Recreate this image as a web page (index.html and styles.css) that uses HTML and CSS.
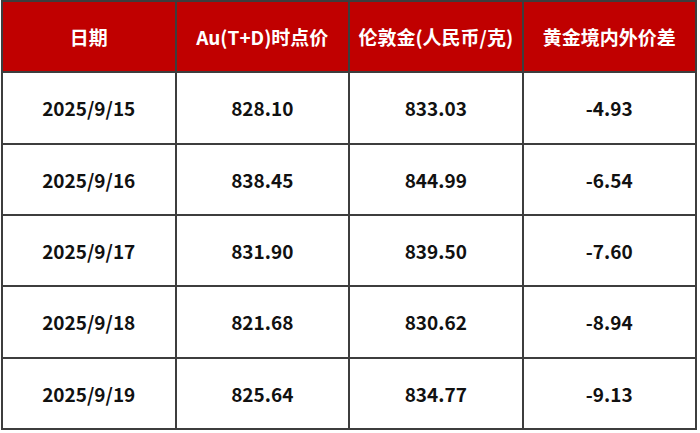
FILE: index.html
```html
<!DOCTYPE html>
<html lang="zh-CN">
<head>
<meta charset="utf-8">
<link rel="stylesheet" href="styles.css">
</head>
<body>
<div class="table">
  <div class="cell head">日期</div>
  <div class="cell head">Au(T+D)时点价</div>
  <div class="cell head">伦敦金(人民币/克)</div>
  <div class="cell head">黄金境内外价差</div>

  <div class="cell">2025/9/15</div>
  <div class="cell">828.10</div>
  <div class="cell">833.03</div>
  <div class="cell">-4.93</div>

  <div class="cell">2025/9/16</div>
  <div class="cell">838.45</div>
  <div class="cell">844.99</div>
  <div class="cell">-6.54</div>

  <div class="cell">2025/9/17</div>
  <div class="cell">831.90</div>
  <div class="cell">839.50</div>
  <div class="cell">-7.60</div>

  <div class="cell">2025/9/18</div>
  <div class="cell">821.68</div>
  <div class="cell">830.62</div>
  <div class="cell">-8.94</div>

  <div class="cell">2025/9/19</div>
  <div class="cell">825.64</div>
  <div class="cell">834.77</div>
  <div class="cell">-9.13</div>
</div>
</body>
</html>
```
FILE: styles.css
```css
html, body {
  margin: 0;
  padding: 0;
  background: #ffffff;
}
body {
  padding-left: 1px;
  font-family: "Noto Sans CJK SC", "Noto Sans", sans-serif;
}
.table {
  width: 696px;
  height: 430px;
  box-sizing: border-box;
  padding: 2px;
  gap: 2px;
  background: #3d3d3d;
  display: grid;
  grid-template-columns: repeat(4, 1fr);
  grid-template-rows: repeat(6, 1fr);
}
.cell {
  background: #ffffff;
  color: #111111;
  font-weight: 700;
  font-size: 19px;
  display: flex;
  align-items: center;
  justify-content: center;
  line-height: 1;
}
.cell.head {
  background: #c00000;
  color: #ffffff;
}
```
